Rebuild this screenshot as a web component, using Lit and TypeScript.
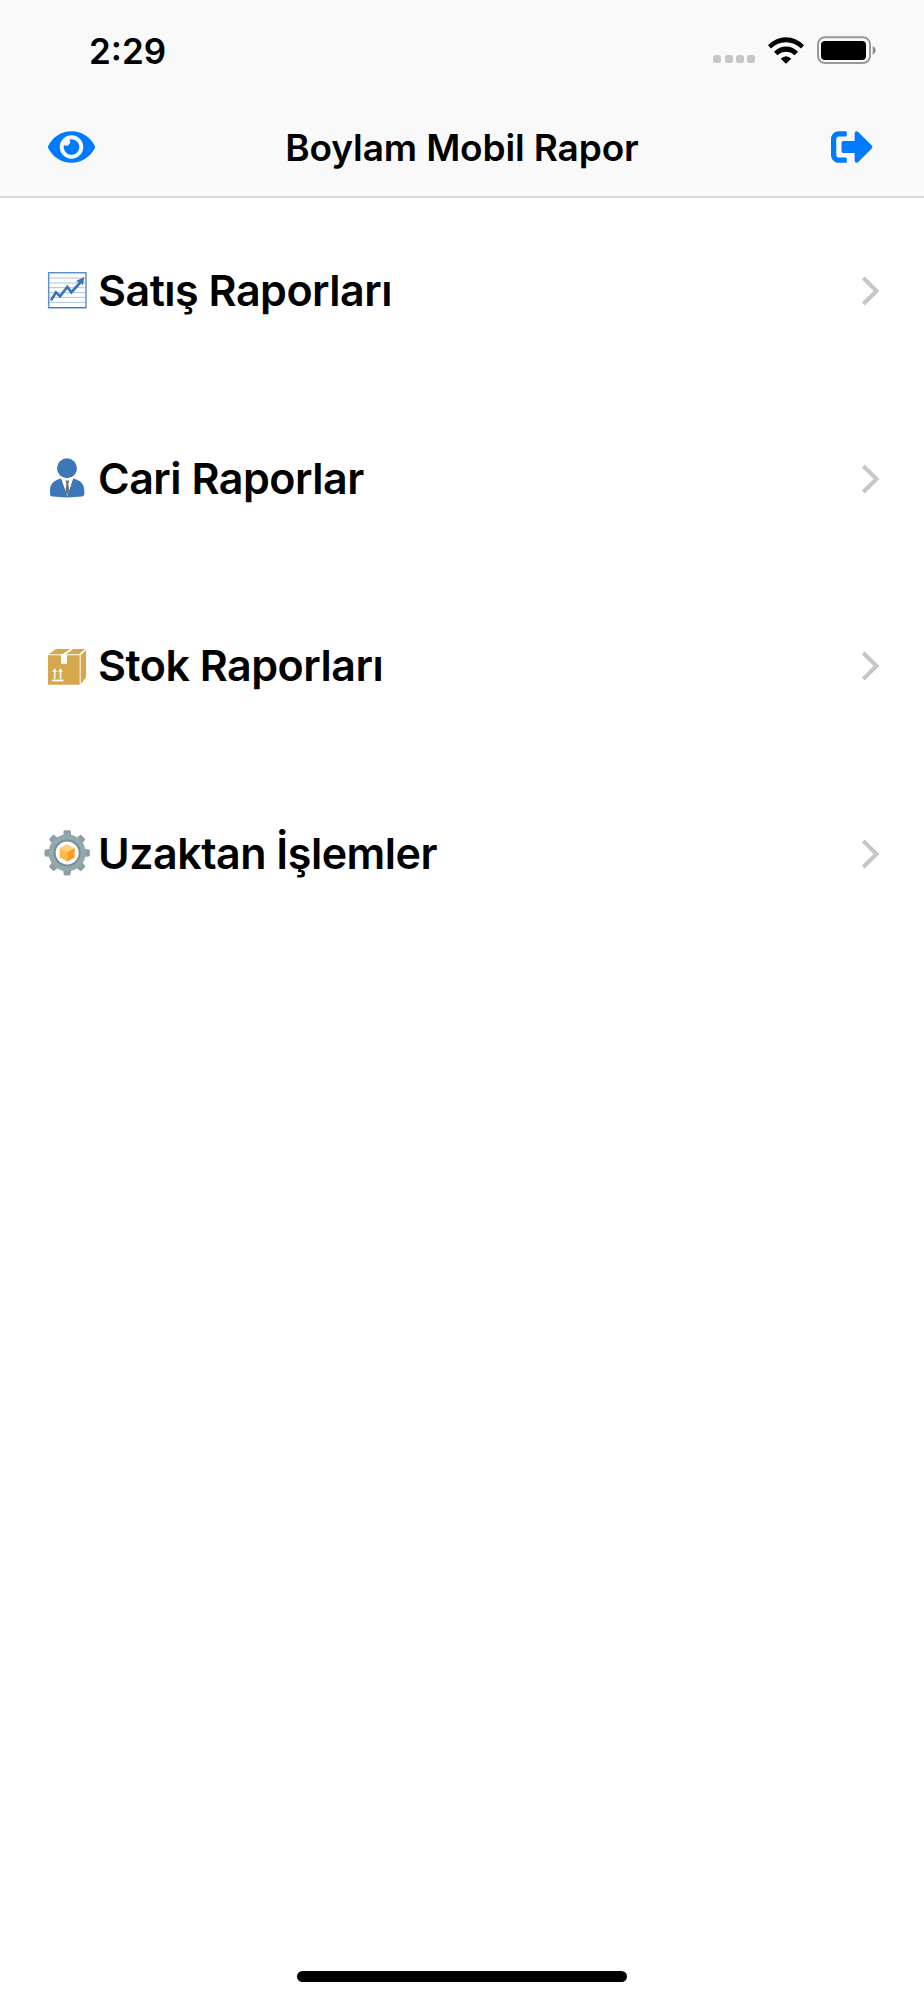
import { LitElement, html, svg, css } from "lit";
import { customElement, property } from "lit/decorators.js";

const chartIcon = svg`
  <svg width="48" height="48" viewBox="39 51 144 144">
    <path d="M57 84H167M57 99H167M57 113H167M57 128H167M57 142H167M57 157H167" stroke="#a6c4e6" stroke-width="3"/>
    <path d="M56 68.500H168V173H56Z" fill="none" stroke="#5d92cb" stroke-width="4.500"/>
    <path d="M56 172.500H168" stroke="#3f7bbb" stroke-width="3"/>
    <path d="M63 151L78 127L90 139L112 111L124 127L152 96" fill="none" stroke="#3a74b2" stroke-width="8"/>
    <path d="M163 81L159 105L151 99L138 93Z" fill="#3a74b2"/>
  </svg>`;

const personIcon = svg`
  <svg width="48" height="48" viewBox="39 44.25 144 144">
    <circle cx="111" cy="84" r="30" fill="#3c78b8"/>
    <path d="M94 115C75 119 60 130 60 151V162Q60 168 67 169Q111 174 156 169Q163 168 163 162V151C163 130 148 119 129 115L112 167Z" fill="#3c78b8"/>
    <path d="M94 115Q111 124 129 115L112 167Z" fill="#fff"/>
    <path d="M106 121H118L115 130L118 154L112 165L106 154L109 130Z" fill="#77716e"/>
  </svg>`;

const boxIcon = svg`
  <svg width="48" height="48" viewBox="39 36 144 144">
    <path d="M54 76H93V101H111V76H149V164H54Z" fill="#d6a84e"/>
    <path d="M56 73L78 57H121L96 73Z" fill="#d6a84e"/>
    <path d="M108 73L130 57H165L147 73Z" fill="#d6a84e"/>
    <path d="M152 76L168 60V143L152 163Z" fill="#d6a84e"/>
    <path d="M66 151.500H100" stroke="#fff" stroke-width="5.500"/>
    <path d="M74 146V122M91.500 146V122" stroke="#fff" stroke-width="5"/>
    <path d="M67 126L74 115L81 126ZM84.500 126L91.500 115L98.500 126Z" fill="#fff"/>
  </svg>`;

const gearTooth = "M99 66L101 48Q102 45 105 45H118Q121 45 122 48L124 66Z";
const gearIcon = svg`
  <svg width="48" height="48" viewBox="39 44.25 144 144">
    ${[0, 45, 90, 135, 180, 225, 270, 315].map(
      (a) => svg`<path d=${gearTooth} transform="rotate(${a} 111.500 113)" fill="#8ba0a6"/>`
    )}
    <circle cx="111.500" cy="113" r="46" fill="#fff" stroke="#92a9ae" stroke-width="19"/>
    <circle cx="111.500" cy="113" r="37.500" fill="none" stroke="#788f96" stroke-width="6"/>
    <path d="M111.500 87L134 98L111.500 111L89 98Z" fill="#ffd07a"/>
    <path d="M89 98L111.500 110V139L89 127Z" fill="#ffb84a"/>
    <path d="M134 98L111.500 110V139L134 127Z" fill="#fb9c2c"/>
  </svg>`;

@customElement("status-bar")
class StatusBar extends LitElement {
  static styles = css`
    :host { display: flex; align-items: center; height: 100px; padding: 0 48px 0 89px; box-sizing: border-box; }
    .time { font-size: 35px; font-weight: 600; line-height: 42px; flex: 1; padding-top: 2px; }
    .dots { display: flex; gap: 3.200px; margin: 18px 13px 0 0; }
    .dot { width: 8px; height: 8px; border-radius: 2.500px; background: #c7c7c7; }
    .wifi { margin-right: 13px; }
    svg { display: block; }
  `;
  render() {
    return html`
      <div class="time">2:29</div>
      <div class="dots">${[0, 1, 2, 3].map(() => html`<span class="dot"></span>`)}</div>
      <svg class="wifi" width="36" height="27" viewBox="234 79.500 108 81">
        <path d="M234 104Q258 80 288 80Q318 80 342 104L333 114Q313 95 288 95Q263 95 243 114Z"/>
        <path d="M252 124Q268 108 288 108Q308 108 324 124L314 134Q302 124 288 124Q274 124 262 134Z"/>
        <path d="M272 145Q280 137 288 137Q296 137 304 145L288 160Z"/>
      </svg>
      <svg width="59" height="28" viewBox="381 78 177 84">
        <rect x="384" y="81.500" width="156" height="77.500" rx="21" fill="none" stroke="#999" stroke-width="6"/>
        <rect x="393" y="93" width="135" height="57" rx="12"/>
        <path d="M548 107Q557 112 557 121Q557 130 548 135Z" fill="#8c8c8c"/>
      </svg>
    `;
  }
}

@customElement("nav-bar")
class NavBar extends LitElement {
  static styles = css`
    :host { display: grid; grid-template-columns: 1fr auto 1fr; align-items: center; height: 98px; padding: 0 51px 2px 48px; box-sizing: border-box; border-bottom: 2px solid #d9d9da; }
    .title { font-size: 37px; font-weight: 600; line-height: 44px; letter-spacing: -0.130px; margin: 0; padding: 1px 0 0 3px; }
    .end { justify-self: end; }
    svg { display: block; fill: #007aff; }
  `;
  render() {
    return html`
      <svg width="47" height="42" viewBox="0 0 576 512">
        <path d="M572.520 241.400C518.290 135.590 410.930 64 288 64S57.680 135.640 3.480 241.410a32.350 32.350 0 0 0 0 29.190C57.710 376.410 165.070 448 288 448s230.320-71.640 284.520-177.410a32.350 32.350 0 0 0 0-29.190zM288 400a144 144 0 1 1 144-144 143.930 143.930 0 0 1-144 144zm0-240a95.310 95.310 0 0 0-25.310 3.790 47.850 47.850 0 0 1-66.900 66.900A95.780 95.780 0 1 0 288 160z"/>
      </svg>
      <h1 class="title">Boylam Mobil Rapor</h1>
      <svg class="end" width="42" height="42" viewBox="0 0 512 512">
        <path d="M497 273L329 441c-15 15-41 4.500-41-17v-96H152c-13.300 0-24-10.700-24-24v-96c0-13.300 10.700-24 24-24h136V88c0-21.400 25.900-32 41-17l168 168c9.300 9.400 9.300 24.600 0 34zM192 436v-40c0-6.600-5.400-12-12-12H96c-17.700 0-32-14.300-32-32V160c0-17.700 14.300-32 32-32h84c6.600 0 12-5.400 12-12V76c0-6.600-5.400-12-12-12H96c-53 0-96 43-96 96v192c0 53 43 96 96 96h84c6.600 0 12-5.400 12-12z"/>
      </svg>
    `;
  }
}

@customElement("menu-row")
class MenuRow extends LitElement {
  @property() label = "";
  @property({ attribute: false }) icon: unknown;
  static styles = css`
    :host { display: flex; align-items: center; height: 187.500px; padding: 0 44px 1px 43px; box-sizing: border-box; }
    .label { flex: 1; font-size: 43px; font-weight: 600; line-height: 52px; letter-spacing: -0.500px; padding: 0 0 2.500px 7px; }
    svg { display: block; }
  `;
  render() {
    return html`
      ${this.icon}
      <span class="label">${this.label}</span>
      <svg width="19" height="30" viewBox="93 49 57 90">
        <path d="M100 55L139.500 94L100 133" fill="none" stroke="#c7c7cb" stroke-width="12.500"/>
      </svg>
    `;
  }
}

@customElement("app-root")
class AppRoot extends LitElement {
  static styles = css`
    :host { display: flex; flex-direction: column; height: 2000px; background: #fff; color: #000; font-family: Inter, "Liberation Sans", sans-serif; }
    .header { background: #f9f9f9; }
    .list { flex: 1; }
    .home { align-self: center; width: 330px; height: 11px; border-radius: 6px; background: #000; margin-bottom: 18px; }
  `;
  render() {
    const rows = [
      { label: "Satış Raporları", icon: chartIcon },
      { label: "Cari Raporlar", icon: personIcon },
      { label: "Stok Raporları", icon: boxIcon },
      { label: "Uzaktan İşlemler", icon: gearIcon },
    ];
    return html`
      <header class="header"><status-bar></status-bar><nav-bar></nav-bar></header>
      <main class="list">
        ${rows.map((r) => html`<menu-row .label=${r.label} .icon=${r.icon}></menu-row>`)}
      </main>
      <div class="home"></div>
    `;
  }
}
